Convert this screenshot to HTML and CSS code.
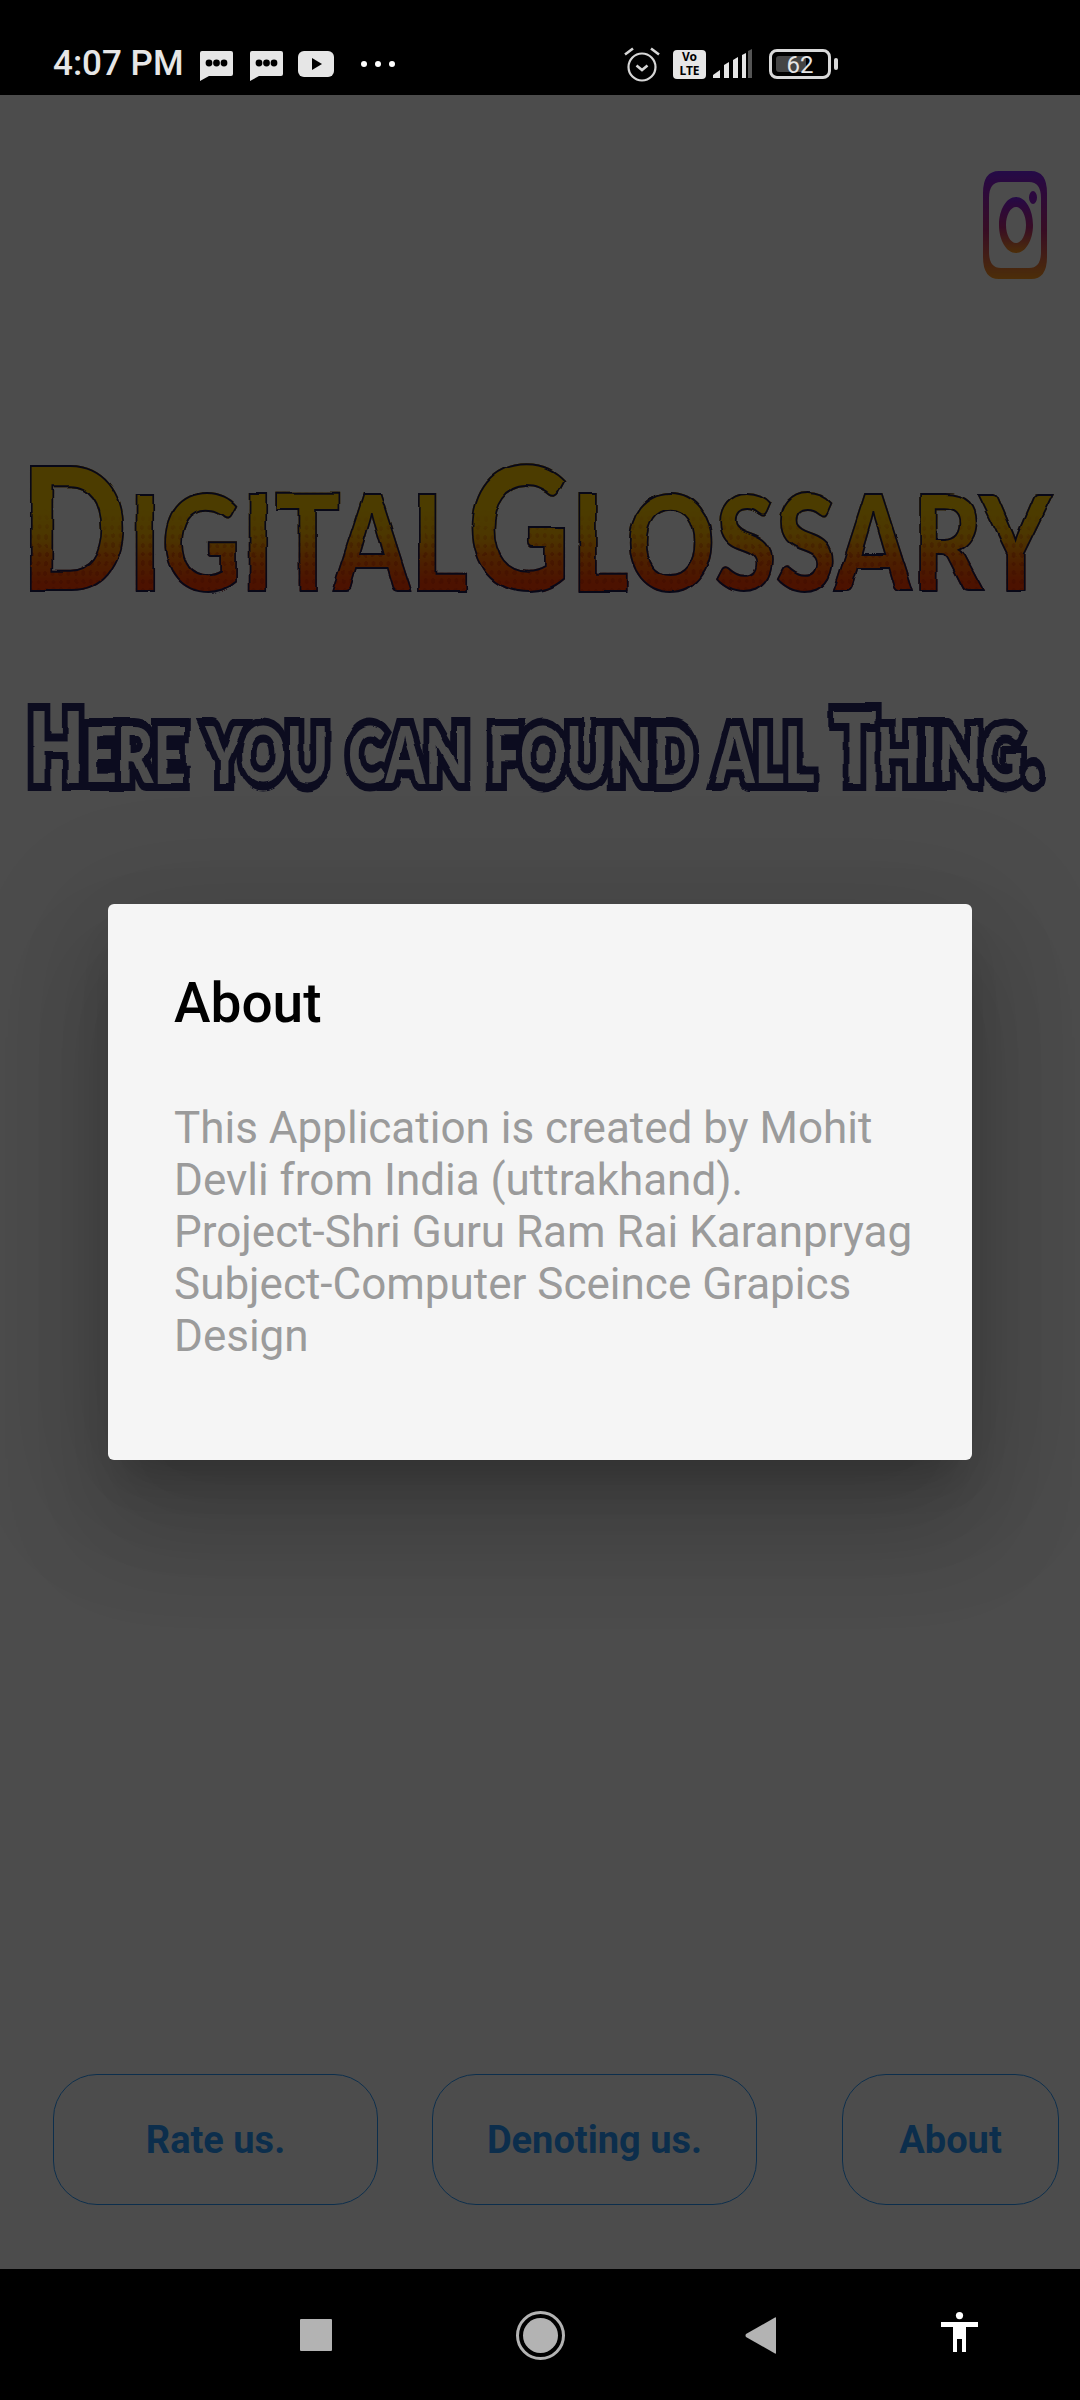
FILE: index.html
```html
<!DOCTYPE html>
<html lang="en">
<head>
    <meta charset="UTF-8">
    <title>Digital Glossary</title>
    <link rel="stylesheet" href="styles.css">
</head>
<body>

<div class="status-bar">
    <span class="clock">4:07 PM</span>
    <svg class="ic-msg" width="33" height="30" viewBox="0 0 33 30">
        <path d="M2 0h29q2 0 2 2v21q0 2-2 2H9l-9 5V2q0-2 2-2z" fill="#e6e6e6"/>
        <circle cx="9" cy="12" r="3.4" fill="#000"/><circle cx="16.500" cy="12" r="3.4" fill="#000"/><circle cx="24" cy="12" r="3.4" fill="#000"/>
    </svg>
    <svg class="ic-msg ic-msg-2" width="33" height="30" viewBox="0 0 33 30">
        <path d="M2 0h29q2 0 2 2v21q0 2-2 2H9l-9 5V2q0-2 2-2z" fill="#e6e6e6"/>
        <circle cx="9" cy="12" r="3.4" fill="#000"/><circle cx="16.500" cy="12" r="3.4" fill="#000"/><circle cx="24" cy="12" r="3.4" fill="#000"/>
    </svg>
    <svg class="ic-yt" width="36" height="26" viewBox="0 0 36 26">
        <rect width="36" height="26" rx="6" fill="#e6e6e6"/>
        <path d="M14 7l10 6-10 6z" fill="#000"/>
    </svg>
    <div class="more-dots"><i></i><i></i><i></i></div>

    <svg class="ic-alarm" width="36" height="35" viewBox="0 0 36 35" fill="none" stroke="#d6d6d6">
        <circle cx="18" cy="20" r="13.500" stroke-width="2.200"/>
        <path d="M12.500 18.500l5.500 4.500 5.500-4.500" stroke-width="2.600"/>
        <path d="M1 7.500L9 1.500M35 7.500L27 1.500" stroke-width="2.600"/>
    </svg>
    <div class="volte"><span>Vo</span><span>LTE</span></div>
    <svg class="ic-signal" width="40" height="29" viewBox="0 0 40 29">
        <path d="M0 29v-3l7-5v8z" fill="#e6e6e6"/>
        <path d="M11 29V16l5-3v16z" fill="#e6e6e6"/>
        <path d="M20 29V11l5-3v21z" fill="#e6e6e6"/>
        <path d="M29 29V6l4-2v25z" fill="#e6e6e6"/>
        <path d="M35 29V2l4-2v29z" fill="#555"/>
    </svg>
    <div class="battery">
        <div class="battery-body"><div class="battery-fill"></div><span class="battery-num">62</span></div>
        <div class="battery-nub"></div>
    </div>
</div>

<main class="app">
    <div class="top-row">
        <svg class="insta" width="64" height="108" viewBox="0 0 64 108">
            <defs>
                <linearGradient id="instaGrad" x1="0" y1="0" x2="0" y2="1">
                    <stop offset="0" stop-color="#7a26ee"/>
                    <stop offset=".12" stop-color="#8f1ecf"/>
                    <stop offset=".55" stop-color="#bb2a7a"/>
                    <stop offset="1" stop-color="#ff9a1e"/>
                </linearGradient>
            </defs>
            <path fill="url(#instaGrad)" fill-rule="evenodd" d="M16 0h32q16 0 16 22v64q0 22-16 22H16Q0 108 0 86V22Q0 0 16 0zM18 11Q6 11 6 27v54q0 16 12 16h28q12 0 12-16V27q0-16-12-16z"/>
            <path fill="url(#instaGrad)" fill-rule="evenodd" d="M33 26c9.500 0 17 12.500 17 28s-7.500 28-17 28-17-12.500-17-28 7.500-28 17-28zm0 10c-5.500 0-10 8-10 18s4.500 18 10 18 10-8 10-18-4.500-18-10-18z"/>
            <ellipse cx="50" cy="26.500" rx="4" ry="6.500" fill="#8f1ecf"/>
        </svg>
    </div>

    <h1 class="logo"><span class="logo-cap">D</span>igital<span class="logo-cap">G</span>lossary</h1>
    <p class="tagline"><span class="tag-cap">H</span>ere you can found all <span class="tag-cap">T</span>hing.</p>

    <div class="actions">
        <button class="pill pill-rate">Rate us.</button>
        <button class="pill pill-donate">Denoting us.</button>
        <button class="pill pill-about">About</button>
    </div>

    <div class="scrim">
        <div class="dialog">
            <h2 class="dialog-title">About</h2>
            <p class="dialog-body">This Application is created by Mohit Devli from India (uttrakhand).<br>Project-Shri Guru Ram Rai Karanpryag<br>Subject-Computer Sceince Grapics Design</p>
        </div>
    </div>
</main>

<nav class="nav-bar">
    <div class="nav-square"></div>
    <svg class="nav-home" width="49" height="49" viewBox="0 0 49 49">
        <circle cx="24.500" cy="24.500" r="23" fill="none" stroke="#b3b3b3" stroke-width="3"/>
        <circle cx="24.500" cy="24.500" r="17.500" fill="#b3b3b3"/>
    </svg>
    <svg class="nav-back" width="31" height="37" viewBox="0 0 31 37">
        <path d="M31 1v35q0 1-1 .5L1 20q-1-1.500 0-3L30 .5q1-.5 1 .5z" fill="#b3b3b3"/>
    </svg>
    <svg class="nav-access" width="37" height="40" viewBox="0 0 37 40">
        <ellipse cx="18.500" cy="3.600" rx="3.600" ry="3.600" fill="#fff"/>
        <path d="M0 10h37v5H25v25h-4V27h-5v13h-4V15H0z" fill="#fff"/>
    </svg>
</nav>

<svg class="defs-only" width="0" height="0">
    <filter id="rough" x="-2%" y="-5%" width="104%" height="110%">
        <feTurbulence type="fractalNoise" baseFrequency=".02 .06" numOctaves="1" seed="4"/>
        <feDisplacementMap in="SourceGraphic" scale="5" xChannelSelector="R" yChannelSelector="G"/>
    </filter>
</svg>

</body>
</html>
```

FILE: styles.css
```css
* {
    box-sizing: border-box;
}

body {
    width: 1080px;
    height: 2400px;
    margin: 0;
    display: flex;
    flex-direction: column;
    overflow: hidden;
    background: #000;
    font-family: Roboto, sans-serif;
}

/* status bar */
.status-bar {
    height: 95px;
    flex: none;
    display: flex;
    align-items: flex-start;
    background: #000;
    color: #e6e6e6;
}

.clock {
    margin: 44px 0 0 53px;
    width: 147px;
    font-size: 35px;
    line-height: 40px;
    font-weight: 500;
    white-space: nowrap;
}

.ic-msg {
    margin-top: 51px;
}

.ic-msg-2 {
    margin-left: 17px;
}

.ic-yt {
    margin: 51px 0 0 15px;
}

.more-dots {
    display: flex;
    gap: 8px;
    margin: 61px 0 0 27px;
}

.more-dots i {
    display: block;
    width: 6px;
    height: 6px;
    border-radius: 50%;
    background: #fff;
}

.ic-alarm {
    margin: 47px 0 0 229px;
}

.volte {
    width: 33px;
    height: 29px;
    margin: 50px 0 0 13px;
    display: flex;
    flex-direction: column;
    align-items: center;
    border-radius: 4px;
    background: #e6e6e6;
    color: #000;
    font-family: "Noto Sans", sans-serif;
    font-size: 12px;
    line-height: 14px;
    font-weight: 700;
}

.ic-signal {
    margin: 49px 0 0 7px;
}

.battery {
    display: flex;
    align-items: center;
    gap: 3px;
    margin: 49px 0 0 16px;
}

.battery-body {
    width: 62px;
    height: 30px;
    position: relative;
    border: 3px solid #d9d9d9;
    border-radius: 8px;
    display: flex;
    align-items: center;
    justify-content: center;
}

.battery-fill {
    position: absolute;
    left: 4px;
    top: 4px;
    bottom: 4px;
    width: 30px;
    border-radius: 3px;
    background: #444;
}

.battery-num {
    position: relative;
    margin-top: 1px;
    font-size: 24px;
    line-height: 24px;
    color: #e6e6e6;
}

.battery-nub {
    width: 4px;
    height: 12px;
    border-radius: 2px;
    background: #d9d9d9;
}

/* page under the dialog */
.app {
    height: 2174px;
    flex: none;
    position: relative;
    display: flex;
    flex-direction: column;
    background: #fff;
}

.top-row {
    display: flex;
    justify-content: flex-end;
    padding: 76px 33px 0 0;
}

.logo {
    margin: 172px 0 0 20px;
    width: 1260px;
    height: 140px;
    font-family: Lato, sans-serif;
    font-size: 190px;
    font-weight: 900;
    font-variant: small-caps;
    line-height: 132px;
    white-space: nowrap;
    color: transparent;
    background:
        linear-gradient(#ffc800 0%, #ffc800 42%, rgba(255, 170, 0, 0) 75%),
        radial-gradient(circle, rgba(200, 40, 0, .4) 35%, transparent 40%) 0 0 / 9px 9px repeat,
        linear-gradient(#ffc800 0%, #ffa800 58%, #ff3c00 95%);
    -webkit-background-clip: text;
    background-clip: text;
    -webkit-text-stroke: 2px #1a1a50;
    transform: scaleX(.827);
    transform-origin: left top;
    filter: url(#rough);
}

.logo-cap {
    font-size: 172px;
}

.tagline {
    margin: 99px 0 0 28px;
    width: 1400px;
    font-family: Lato, sans-serif;
    font-size: 112px;
    font-weight: 900;
    font-variant: small-caps;
    line-height: 100px;
    white-space: nowrap;
    color: #fff;
    -webkit-text-stroke: 16px #2a2a6b;
    paint-order: stroke fill;
    transform: scaleX(.727);
    transform-origin: left top;
    filter: url(#rough);
}

.tag-cap {
    font-size: 100px;
}

.actions {
    margin-top: auto;
    padding: 0 0 64px 53px;
    display: flex;
}

.pill {
    height: 131px;
    padding: 0;
    border: 1.5px solid #2b9cff;
    border-radius: 44px;
    background: none;
    color: #2b9cff;
    font-family: Roboto, sans-serif;
    font-size: 38px;
    font-weight: 700;
}

.pill-rate {
    width: 325px;
}

.pill-donate {
    width: 325px;
    margin-left: 54px;
}

.pill-about {
    width: 217px;
    margin-left: 85px;
}

/* dialog */
.scrim {
    position: absolute;
    inset: 0;
    display: flex;
    align-items: center;
    justify-content: center;
    background: rgba(0, 0, 0, .7);
}

.dialog {
    width: 864px;
    height: 556px;
    padding: 67px 50px 0 66px;
    border-radius: 6px;
    background: #f5f5f5;
    box-shadow: 0 30px 41px -19px rgba(0, 0, 0, .2), 0 66px 104px 8px rgba(0, 0, 0, .14), 0 25px 126px 22px rgba(0, 0, 0, .12);
}

.dialog-title {
    margin: 0;
    font-size: 55px;
    line-height: 64px;
    font-weight: 500;
    color: #000;
}

.dialog-body {
    margin: 67px 0 0;
    font-size: 44px;
    line-height: 52px;
    color: #9b9b9b;
}

/* nav bar */
.nav-bar {
    height: 131px;
    flex: none;
    display: flex;
    align-items: flex-start;
    background: #000;
}

.nav-square {
    width: 32px;
    height: 32px;
    margin: 50px 0 0 300px;
    border-radius: 1px;
    background: #b3b3b3;
}

.nav-home {
    margin: 42px 0 0 184px;
}

.nav-back {
    margin: 48px 0 0 180px;
}

.nav-access {
    margin: 43px 0 0 165px;
}

.defs-only {
    position: absolute;
}
```
